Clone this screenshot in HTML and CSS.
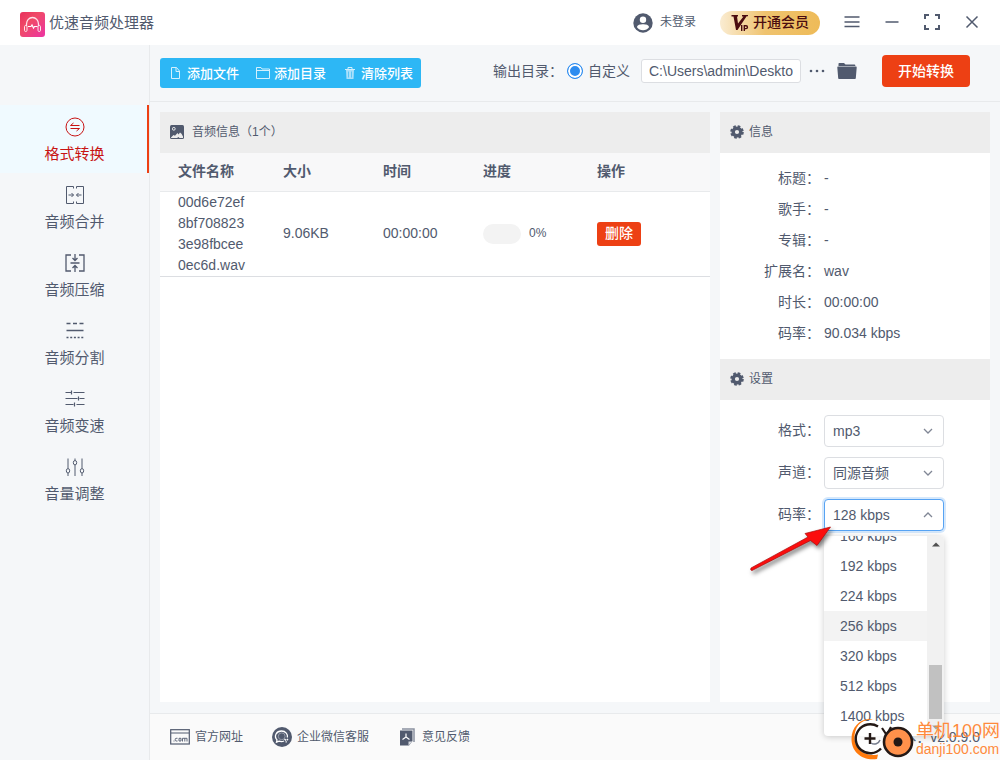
FILE: index.html
```
<!DOCTYPE html>
<html lang="zh-CN">
<head>
<meta charset="utf-8">
<meta name="viewport" content="width=device-width, initial-scale=1">
<title>优速音频处理器</title>
<link rel="stylesheet" href="styles.css">
</head>
<body>
<div class="app">
  <header class="titlebar">
    <svg class="logo" width="25" height="25" viewBox="0 0 25 25" aria-hidden="true">
      <defs><linearGradient id="lg" x1="0" y1="0" x2="1" y2="1"><stop offset="0" stop-color="#e8305c"/><stop offset=".4" stop-color="#f04a68"/><stop offset="1" stop-color="#ec34a4"/></linearGradient></defs>
      <rect width="25" height="25" rx="3" fill="url(#lg)"/>
      <path d="M6.500 14V12a6 6.500 0 0 1 12 0v2" fill="none" stroke="#ffe3ea" stroke-width="1.300"/>
      <rect x="4.500" y="13.500" width="2.500" height="6" rx="1.200" fill="none" stroke="#ffe3ea"/>
      <rect x="18" y="13.500" width="2.500" height="6" rx="1.200" fill="none" stroke="#ffe3ea"/>
      <path d="M8 14.500h3l1-1.500 1.500 3 1-1.500h3" fill="none" stroke="#fff" stroke-width="1.200"/>
    </svg>
    <h1 class="app-name">优速音频处理器</h1>
    <button class="login" type="button">
      <svg width="20" height="20" viewBox="0 0 20 20" aria-hidden="true"><circle cx="10" cy="10" r="9.700" fill="#515a6e"/><circle cx="10" cy="6.700" r="3.200" fill="#fff"/><path d="M4 14.200C4 11.800 7.500 11.200 10 11.200s6 .6 6 3c-1.300 1.900-3.500 3-6 3s-4.700-1.100-6-3z" fill="#fff"/></svg>
      <span>未登录</span>
    </button>
    <button class="vip" type="button">
      <svg width="18" height="18" viewBox="0 0 18 18" aria-hidden="true"><path d="M.5 1h6.500v1.500H6l1 7L12.500 2.500H11V1h6v1.200h-1.400L6.500 16H5L2.500 2.500h-2z" fill="#4a0c10"/><path d="M10.700 11v6M13.300 17v-5.300h1.700a1.400 1.400 0 0 1 0 2.900h-1.700" fill="none" stroke="#4a0c10" stroke-width="1.400"/></svg>
      <span>开通会员</span>
    </button>
    <div class="window-buttons">
      <button type="button" aria-label="菜单"><svg width="16" height="16" viewBox="0 0 16 16"><path d="M.5 3h15M.5 8h15M.5 12.500h15"/></svg></button>
      <button type="button" aria-label="最小化"><svg width="16" height="16" viewBox="0 0 16 16"><path d="M1.500 8h13"/></svg></button>
      <button type="button" aria-label="最大化"><svg width="16" height="16" viewBox="0 0 16 16"><path stroke-width="2" d="M1 5V1h4M11 1h4v4M15 11v4h-4M5 15H1v-4"/></svg></button>
      <button type="button" aria-label="关闭"><svg width="16" height="16" viewBox="0 0 16 16"><path d="M2.500 2.500l11 11M13.500 2.500l-11 11"/></svg></button>
    </div>
  </header>

  <div class="body">
    <nav class="sidebar">
      <a class="nav-item active" href="#convert">
        <svg width="20" height="20" viewBox="0 0 20 20"><circle cx="10" cy="10" r="9"/><path d="M14.500 8.500h-9l3-2.500M5.500 11.500h9l-3 2.500"/></svg>
        <span>格式转换</span></a>
      <a class="nav-item" href="#merge">
        <svg width="20" height="20" viewBox="0 0 20 20"><path d="M8.500 3.500v-2h-7v17h7v-2M11.500 3.500v-2h7v17h-7v-2M3.500 10h5M6.500 8l2 2-2 2M16.500 10h-5M13.500 8l-2 2 2 2"/></svg>
        <span>音频合并</span></a>
      <a class="nav-item" href="#compress">
        <svg width="20" height="20" viewBox="0 0 20 20" stroke-width="1.300"><path d="M6 2H1v16h5M14 2h5v16h-5M5.500 10h9M10 1v6M7.500 5L10 7.500 12.500 5M10 19v-6M7.500 15l2.500-2.500 2.500 2.500"/></svg>
        <span>音频压缩</span></a>
      <a class="nav-item" href="#split">
        <svg width="20" height="20" viewBox="0 0 20 20" stroke-width="1.300"><path d="M1.500 2.500h4M8 2.500h4M14.500 2.500h4M1.500 9.500h17"/><path d="M1.500 16.500h17" stroke-dasharray="2 1.700"/></svg>
        <span>音频分割</span></a>
      <a class="nav-item" href="#speed">
        <svg width="20" height="20" viewBox="0 0 20 20" stroke-width="1.200"><path d="M.5 3.500h6M8.500 3.500h11M6.500 1.500v4M.5 9.500h12M14.500 9.500h5M13.500 7.500v4M.5 15.500h8M11.500 15.500h8M9.500 13.500v4"/></svg>
        <span>音频变速</span></a>
      <a class="nav-item" href="#volume">
        <svg width="20" height="20" viewBox="0 0 20 20"><path d="M3 1.500v10M3 16v3M10 1.500v2M10 8v11M17 1.500v10M17 16v3"/><ellipse cx="3" cy="13.800" rx="1.700" ry="2.200"/><ellipse cx="10" cy="5.700" rx="1.700" ry="2.200"/><ellipse cx="17" cy="13.800" rx="1.700" ry="2.200"/></svg>
        <span>音量调整</span></a>
    </nav>

    <div class="content">
      <div class="toolbar">
        <div class="file-buttons">
          <button type="button"><svg width="14" height="14" viewBox="0 0 14 14"><path d="M2.500 1.500h5l3 3.500v7.500h-8zM7 1.500v4h3.500"/></svg>添加文件</button>
          <button type="button"><svg width="14" height="14" viewBox="0 0 14 14"><path d="M.5 1.500h4.500l1 1.500h7.500v9.500H.5zM.5 4.500h13"/></svg>添加目录</button>
          <button type="button"><svg width="14" height="14" viewBox="0 0 14 14"><path d="M2 3.500h10M5 3V1.500h4V3"/><path d="M3 4h8l-.5 9h-7z" fill="#a9e0fb" stroke="none"/><path d="M5.500 5.500v6M8.500 5.500v6" stroke="#5bc5f6"/></svg>清除列表</button>
        </div>
        <div class="output">
          <span class="output-label">输出目录：</span>
          <label class="radio"><input type="radio" name="dir" checked>自定义</label>
          <input class="path" type="text" aria-label="输出目录路径" value="C:\Users\admin\Deskto">
          <button class="plain more" type="button" aria-label="更多"><svg width="16" height="4" viewBox="0 0 16 4"><circle cx="2" cy="2" r="1.300"/><circle cx="8" cy="2" r="1.300"/><circle cx="14" cy="2" r="1.300"/></svg></button>
          <button class="plain folder" type="button" aria-label="打开目录"><svg width="20" height="18" viewBox="0 0 20 18"><path d="M1.500 3.600V1.700Q1.500 1 2.200 1H7l1.500 1.500h9q.8 0 .8.800v.8H1.500zM1 4.600h18q.8 0 .7.800l-.9 10.800q-.1.800-.8.800H2q-.8 0-.8-.8L.3 5.400q-.1-.8.7-.8z"/></svg></button>
          <button class="start" type="button">开始转换</button>
        </div>
      </div>

      <main class="panels">
        <section class="panel files">
          <h2 class="panel-title"><svg width="14" height="14" viewBox="0 0 14 14" aria-hidden="true"><rect width="14" height="14" rx="1.500" fill="#515a6e"/><circle cx="3.800" cy="3.800" r="1.400" fill="#515a6e" stroke="#ededed"/><path d="M1 12.500L3.500 10l1.500.8L7.500 8l1 1.500L10 7.500l1.500 1.200L13 11.500V13H9.500l-1-1-1.500 1H1z" fill="#ededed"/></svg>音频信息（1个）</h2>
          <table class="file-table">
            <colgroup><col class="c-name"><col class="c-size"><col class="c-time"><col class="c-progress"><col></colgroup>
            <thead><tr><th>文件名称</th><th>大小</th><th>时间</th><th>进度</th><th>操作</th></tr></thead>
            <tbody><tr>
              <td class="name">00d6e72ef8bf7088233e98fbcee0ec6d.wav</td><td>9.06KB</td><td>00:00:00</td>
              <td><div class="progress"><span class="bar"></span><span>0%</span></div></td>
              <td><button class="delete" type="button">删除</button></td>
            </tr></tbody>
          </table>
        </section>

        <section class="panel side">
          <h2 class="panel-title tight"><svg width="14" height="14" viewBox="0 0 14 14" aria-hidden="true"><circle cx="7" cy="7" r="3.800" fill="none" stroke="#515a6e" stroke-width="3.400"/><circle cx="7" cy="7" r="5.700" fill="none" stroke="#515a6e" stroke-width="2.200" stroke-dasharray="2.600 1.877"/></svg>信息</h2>
          <dl class="info">
            <dt>标题：</dt><dd>-</dd>
            <dt>歌手：</dt><dd>-</dd>
            <dt>专辑：</dt><dd>-</dd>
            <dt>扩展名：</dt><dd>wav</dd>
            <dt>时长：</dt><dd>00:00:00</dd>
            <dt>码率：</dt><dd>90.034 kbps</dd>
          </dl>
          <h2 class="panel-title tight"><svg width="14" height="14" viewBox="0 0 14 14" aria-hidden="true"><circle cx="7" cy="7" r="3.800" fill="none" stroke="#515a6e" stroke-width="3.400"/><circle cx="7" cy="7" r="5.700" fill="none" stroke="#515a6e" stroke-width="2.200" stroke-dasharray="2.600 1.877"/></svg>设置</h2>
          <form class="settings">
            <label for="format">格式：</label>
            <div class="field"><select id="format"><option>mp3</option></select><svg class="chevron" width="10" height="6" viewBox="0 0 10 6"><path d="M1 1l4 4 4-4"/></svg></div>
            <label for="channel">声道：</label>
            <div class="field"><select id="channel"><option>同源音频</option></select><svg class="chevron" width="10" height="6" viewBox="0 0 10 6"><path d="M1 1l4 4 4-4"/></svg></div>
            <label for="rate">码率：</label>
            <div class="field open"><select id="rate"><option>128 kbps</option></select><svg class="chevron" width="10" height="6" viewBox="0 0 10 6"><path d="M1 5l4-4 4 4"/></svg>
              <div class="menu">
                <ul class="options" role="listbox" aria-label="码率">
                  <li role="option">160 kbps</li>
                  <li role="option">192 kbps</li>
                  <li role="option">224 kbps</li>
                  <li role="option" class="hover">256 kbps</li>
                  <li role="option">320 kbps</li>
                  <li role="option">512 kbps</li>
                  <li role="option">1400 kbps</li>
                </ul>
                <div class="scrollbar">
                  <svg width="8" height="5" viewBox="0 0 8 5"><path d="M0 4.500L4 .5l4 4z" fill="#505050"/></svg>
                  <span class="thumb"></span>
                  <svg width="8" height="5" viewBox="0 0 8 5"><path d="M0 .5l4 4 4-4z" fill="#a3a3a3"/></svg>
                </div>
              </div>
              <svg class="pointer" width="92" height="56" viewBox="0 0 92 56" aria-hidden="true"><path d="M5 45L62 14l-3-3.500L84.500 4 71 22.500l-6.500-5L6 47.500Q4 47.500 5 45z" fill="#fb0d0d" stroke="#a80b0b" stroke-width=".7"/></svg>
            </div>
          </form>
        </section>
      </main>

      <footer class="footer">
        <a class="site" href="#site"><svg width="20" height="16" viewBox="0 0 20 16"><rect x=".7" y=".7" width="18.600" height="14.300" fill="none" stroke="#515a6e" stroke-width="1.200"/><path d="M1 4h18" stroke="#515a6e"/><path d="M3.500 12h1M7.500 9.300H6q-.8 0-.8 1.300T6 12h1.500M9 9.300h2V12H9zM12.500 12.500V9.300H17v3.200M14.800 9.300v3.200" fill="none" stroke="#515a6e" stroke-width=".9"/></svg>官方网址</a>
        <a class="service" href="#service"><svg width="20" height="20" viewBox="0 0 20 20"><circle cx="10" cy="10" r="10" fill="#515a6e"/><path d="M12 14q-2.300 1.200-5 .2l-2.500 1 .5-2.300C1.500 9 4.500 4 9.500 4c4.300 0 6.500 3.300 5.900 6.500" fill="none" stroke="#fff" stroke-width="1.300"/><circle cx="9.700" cy="9.300" r="3.400" fill="none" stroke="#a5aab6" stroke-width=".8"/><path d="M12.500 12l1.500 1.500M16 12l-1.200 1.200M14.200 15.500v-1.300" stroke="#fff" stroke-width="1.300"/></svg>企业微信客服</a>
        <a class="feedback" href="#feedback"><svg width="16" height="18" viewBox="0 0 16 18"><path d="M3 1h12v13" fill="none" stroke="#8b91a0" stroke-width="1.500"/><path d="M1 2.500h12.500V13L10 17.500H1z" fill="#515a6e"/><path d="M9.500 17.500v-4h4z" fill="#d8dae0"/><path d="M7 5.500v3.500L3.500 11.500M7 9l3.500 2.500" fill="none" stroke="#fff" stroke-width="1.200"/></svg>意见反馈</a>
        <span class="version">版本：v2.0.9.0</span>
      </footer>
    </div>
  </div>

  <div class="watermark">
    <svg width="66" height="42" viewBox="0 0 66 42" aria-hidden="true">
      <path d="M23 1.500C9 1 4 11 4.500 21 5.500 32 15 39 28 36.500L27 41C12 43 1.500 34 1.500 21 1.500 8 12-1 23 1.500z" fill="#ff7a0d"/>
      <circle cx="20" cy="20.500" r="15" fill="#fff" fill-opacity=".75"/>
      <path d="M28 8.500A14.500 14.500 0 1 0 31 30.500" fill="none" stroke="#231815" stroke-width="2.400"/>
      <path d="M20 15v11M14.500 20.500h11" stroke="#231815" stroke-width="2.400"/>
      <path d="M21 25a6 6 0 0 0 9-3" fill="none" stroke="#737a8b" stroke-width="1.500"/>
      <path d="M32 10l4 6M41 9l-6 11" stroke="#231815" stroke-width="2.200"/>
      <circle cx="48" cy="24" r="14" fill="#ff914b" stroke="#231815" stroke-width="2.600"/>
      <circle cx="48" cy="24" r="4.500" fill="#231815"/>
    </svg>
    <div class="watermark-text"><span class="wm-name">单机100网</span><span class="wm-url">danji100.com</span></div>
  </div>
</div>
</body>
</html>
```
FILE: styles.css
```
* { box-sizing: border-box; }
body {
  margin: 0;
  font: 14px/21px "Liberation Sans", "Noto Sans CJK SC", sans-serif;
  color: #515a6e;
}
h1, h2, dl, dd, ul { margin: 0; padding: 0; font-weight: normal; }
a { color: inherit; text-decoration: none; }
svg { flex: none; display: block; }
button, input, select { font: inherit; color: inherit; margin: 0; }
button { border: 0; padding: 0; background: none; cursor: pointer; white-space: nowrap; }
.app { position: relative; display: flex; flex-direction: column; min-height: 100vh; background: #f5f7f9; }

.titlebar { display: flex; align-items: center; height: 45px; padding: 0 8px 0 20px; background: #fff; }
.logo { margin-top: 4px; }
.app-name { margin-left: 4px; font-size: 15px; }
.login { display: flex; align-items: center; gap: 7px; margin-left: auto; font-size: 12px; }
.vip {
  display: flex; align-items: center; justify-content: center; gap: 4px;
  width: 100px; height: 24px; margin: 0 12px 0 24px; border-radius: 12px;
  background: linear-gradient(90deg, #faecd2, #efc36f 45%, #eebb58);
  color: #4a0c10; font-weight: 500;
}
.window-buttons { display: flex; padding-bottom: 2px; }
.window-buttons button { display: flex; justify-content: center; width: 40px; }
.window-buttons svg { fill: none; stroke: #515a6e; stroke-width: 1.5; }

.body { display: flex; flex: 1; }
.sidebar { flex: none; width: 150px; padding-top: 60px; border-right: 1px solid #e8eaec; }
.nav-item {
  display: flex; flex-direction: column; align-items: center; gap: 6px;
  height: 68px; padding: 12px 0 0 2px; border-right: 2px solid transparent; font-size: 15px;
}
.nav-item svg { fill: none; stroke: currentColor; }
.nav-item.active { background: #f0faff; border-color: #ed4014; color: #c81414; }

.content { display: flex; flex: 1; flex-direction: column; min-width: 0; }
.toolbar {
  display: flex; align-items: center; justify-content: space-between;
  height: 57px; padding: 0 30px 0 10px; border-bottom: 1px solid #e8eaec;
}
.file-buttons { display: flex; background: #2db7f5; border-radius: 3px; }
.file-buttons button {
  display: flex; align-items: center; gap: 4px; height: 30px; padding: 0 8px 0 9px;
  color: #fff; font-size: 13px; font-weight: 500;
}
.file-buttons svg { fill: none; stroke: #d4f0fd; }
.output { display: flex; align-items: center; padding-bottom: 4px; }
.output-label { margin-right: 4px; white-space: nowrap; }
.radio { display: flex; align-items: center; gap: 5px; margin-right: 11px; white-space: nowrap; }
.radio input {
  appearance: none; width: 16px; height: 16px; border: 1px solid #2d8cf0; border-radius: 50%;
  background: #2d8cf0; box-shadow: inset 0 0 0 2px #fff;
}
.path { width: 160px; height: 24px; padding: 0 7px; border: 1px solid #dcdee2; border-radius: 3px; background: #fff; }
.plain svg { fill: #515a6e; }
.more { margin-left: 8px; }
.folder { margin-left: 12px; }
.start { width: 88px; height: 32px; margin-left: 25px; border-radius: 4px; background: #ed4014; color: #fff; font-weight: 500; }

.panels { display: flex; flex: 1; gap: 10px; padding: 10px 10px 11px; }
.panel { background: #fff; }
.files { flex: 1; min-width: 0; }
.side { flex: none; width: 270px; }
.panel-title {
  display: flex; align-items: center; gap: 8px; height: 41px; padding: 0 10px 1px;
  background: #ededed; font-size: 12px;
}
.panel-title.tight { gap: 5px; }

.file-table { width: 100%; table-layout: fixed; border-collapse: collapse; text-align: left; }
.c-name { width: 105px; }
.c-size, .c-time { width: 100px; }
.c-progress { width: 114px; }
.file-table th { height: 38px; padding: 0 18px; background: #f8f8f9; border-bottom: 1px solid #e8eaec; }
.file-table td { padding: 0 18px; border-bottom: 1px solid #dcdee2; }
.file-table .name { word-break: break-all; }
.progress { display: flex; align-items: center; gap: 8px; font-size: 12px; }
.bar { width: 38px; height: 20px; border-radius: 10px; background: #f3f3f3; }
.delete { width: 44px; height: 24px; border-radius: 3px; background: #ed4014; color: #fff; font-weight: 500; }

.info { display: grid; grid-template-columns: 100px 1fr; column-gap: 4px; padding: 10px 0; line-height: 31px; }
.info dt, .settings label { text-align: right; }
.settings { display: grid; grid-template-columns: 100px 120px; gap: 10px 4px; padding-top: 15px; line-height: 30px; }
.field { position: relative; height: 32px; }
.field select {
  appearance: none; width: 100%; height: 32px; padding: 0 24px 0 8px;
  border: 1px solid #dcdee2; border-radius: 4px; background: #fff;
}
.field.open select { border-color: #57a3f3; box-shadow: 0 0 0 2px #d5e8fc; }
.chevron { position: absolute; top: 13px; right: 11px; fill: none; stroke: #808695; stroke-width: 1.3; pointer-events: none; }
.menu {
  position: absolute; z-index: 2; top: 37px; left: 0; display: flex; width: 120px; height: 200px;
  border-radius: 4px; background: #fff; box-shadow: 0 1px 6px rgba(0, 0, 0, .2); overflow: hidden;
}
.options { display: flex; flex: 1; flex-direction: column; justify-content: flex-end; padding-bottom: 5px; list-style: none; }
.options li { flex: none; height: 30px; padding-left: 16px; }
.options .hover { background: #f3f3f3; }
.scrollbar { display: flex; flex-direction: column; align-items: center; width: 17px; padding: 6px 0; background: #f1f1f1; }
.thumb { width: 13px; height: 54px; margin: auto 0 6px; background: #c1c1c1; }
.pointer { position: absolute; z-index: 3; top: 24px; left: -78px; filter: drop-shadow(2px 3px 2px rgba(0, 0, 0, .5)); }

.footer {
  display: flex; align-items: center; gap: 29px; height: 47px; padding: 0 20px;
  border-top: 1px solid #e8eaec; background: #fafafa; font-size: 12px;
}
.footer a { display: flex; align-items: center; gap: 5px; }
.footer .feedback { gap: 7px; padding-left: 1px; }
.version { margin-left: auto; font-size: 14px; }

.watermark { position: absolute; z-index: 4; right: 0; bottom: 0; display: flex; align-items: center; pointer-events: none; }
.watermark-text { display: flex; flex-direction: column; color: #ff8a3c; }
.wm-name { font-size: 18px; line-height: 20px; }
.wm-url { font-size: 14px; line-height: 16px; }
```
